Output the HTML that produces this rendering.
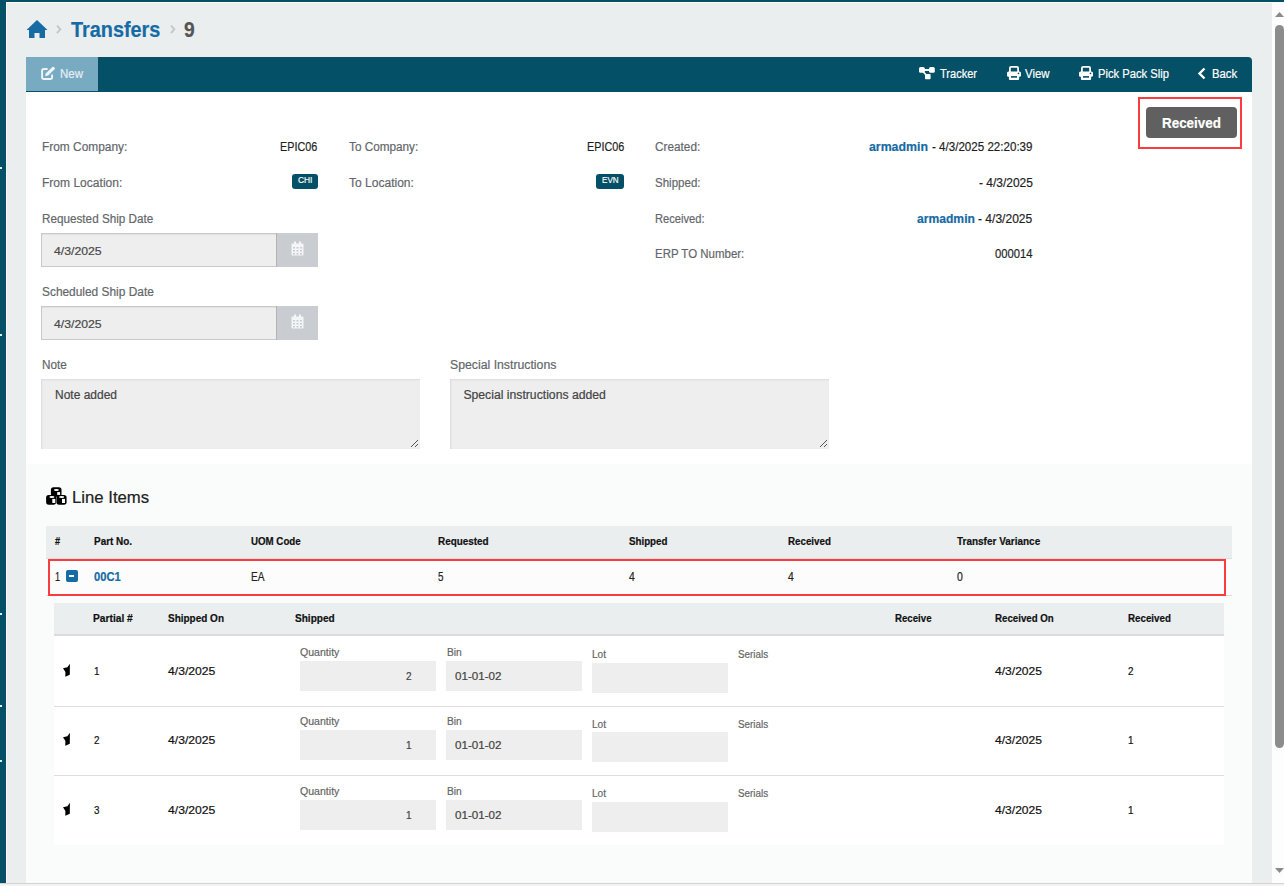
<!DOCTYPE html>
<html><head><meta charset="utf-8"><title>Transfers 9</title>
<style>
html,body{margin:0;padding:0;width:1284px;height:886px;overflow:hidden;background:#eaeeef}
body{position:relative;font-family:"Liberation Sans",sans-serif}
.t{position:absolute;white-space:nowrap;line-height:1;-webkit-text-stroke:0.2px currentColor}
.b{position:absolute;display:block}
</style></head><body>
<div class="b" style="left:0px;top:0px;width:1284px;height:886px;background:#eaeeef"></div>
<div class="b" style="left:0px;top:0px;width:1284px;height:2px;background:#045066"></div>
<div class="b" style="left:0px;top:2px;width:1284px;height:1px;background:#fbfbfb"></div>
<div class="b" style="left:0px;top:0px;width:6px;height:883px;background:#045066"></div>
<div class="b" style="left:6px;top:3px;width:1px;height:880px;background:#fafafa"></div>
<div class="b" style="left:0px;top:167px;width:2px;height:2px;background:#e8eef0"></div>
<div class="b" style="left:0px;top:334px;width:2px;height:2px;background:#e8eef0"></div>
<div class="b" style="left:0px;top:613px;width:2px;height:2px;background:#e8eef0"></div>
<div class="b" style="left:0px;top:705px;width:2px;height:2px;background:#e8eef0"></div>
<div class="b" style="left:0px;top:760px;width:2px;height:2px;background:#e8eef0"></div>
<div class="b" style="left:0px;top:883px;width:1284px;height:1px;background:#d2d2d2"></div>
<div class="b" style="left:0px;top:884px;width:1284px;height:2px;background:#f3f3f3"></div>
<div class="b" style="left:1272px;top:3px;width:12px;height:880px;background:#fdfdfd"></div>
<svg class="b" style="left:1275px;top:11px" width="9" height="7"><polygon points="0,6 4.5,1 9,6" fill="#8a8a8a"/></svg>
<div class="b" style="left:1275px;top:25px;width:9px;height:723px;background:#8c8c8c;border-radius:4.5px"></div>
<svg class="b" style="left:1275px;top:867px" width="9" height="7"><polygon points="0,1 9,1 4.5,6" fill="#8a8a8a"/></svg>
<svg class="b" style="left:26px;top:19px" width="22" height="20" viewBox="0 0 22 20"><path d="M11 1 L21.5 11 L19 11 L19 19 L13.5 19 L13.5 14 L8.5 14 L8.5 19 L3 19 L3 11 L0.5 11 Z" fill="#166ba5"/></svg>
<svg class="b" style="left:55px;top:24px" width="8" height="11"><polyline points="2,1.5 5.3,5.3 2,9.2" fill="none" stroke="#c4c7ca" stroke-width="1.9"/></svg>
<svg class="b" style="left:169px;top:24px" width="8" height="11"><polyline points="2,1.5 5.3,5.3 2,9.2" fill="none" stroke="#c4c7ca" stroke-width="1.9"/></svg>
<div class="t" style="left:71.0px;top:19.15px;font-size:21.8px;color:#166ba5;font-weight:bold;transform:scaleX(0.910);transform-origin:0 0;">Transfers</div>
<div class="t" style="left:184.3px;top:19.15px;font-size:21.8px;color:#555;font-weight:bold;transform:scaleX(0.883);transform-origin:0 0;">9</div>
<div class="b" style="left:26px;top:57px;width:1226px;height:35px;background:#045066;border-radius:0 4px 0 0"></div>
<div class="b" style="left:26px;top:57px;width:72px;height:34px;background:#78aac2"></div>
<svg class="b" style="left:40px;top:66px" width="16" height="15" viewBox="0 0 16 15"><path d="M7.6 3 H3.9 Q2.1 3 2.1 4.8 V11.2 Q2.1 13 3.9 13 H10.3 Q12.1 13 12.1 11.2 V8.6" fill="none" stroke="#eef4f7" stroke-width="1.9"/><path d="M5.1 10.2 L5.7 7.4 L12.4 1.1 Q13.2 0.4 14 1.1 L14.6 1.7 Q15.3 2.5 14.6 3.3 L8.1 9.6 Z" fill="#eef4f7"/></svg>
<div class="t" style="left:59.8px;top:67.67px;font-size:12.79px;color:#e6eff3;transform:scaleX(0.899);transform-origin:0 0;">New</div>
<svg class="b" style="left:918px;top:66px" width="18" height="14" viewBox="0 0 18 14"><path d="M4 4 H14 M4.5 5 L9.5 10.5" stroke="#fff" stroke-width="1.8" fill="none"/><rect x="1" y="1" width="5.8" height="5.8" rx="1.6" fill="#fff"/><rect x="11" y="1" width="5.8" height="5.8" rx="1.6" fill="#fff"/><rect x="7" y="8" width="5.6" height="5.2" rx="0.8" fill="#fff"/></svg>
<div class="t" style="left:939.8px;top:66.63px;font-size:13.08px;color:#ffffff;transform:scaleX(0.844);transform-origin:0 0;">Tracker</div>
<svg class="b" style="left:1007px;top:66px" width="15" height="15" viewBox="0 0 15 15"><rect x="2.9" y="0.9" width="8.2" height="6" rx="1.2" fill="none" stroke="#fff" stroke-width="1.8"/><rect x="0" y="5.4" width="14" height="5.4" rx="1.6" fill="#fff"/><rect x="1.9" y="9" width="10.2" height="5" rx="1" fill="#fff"/><rect x="4" y="10.1" width="6" height="1.6" fill="#045066"/><circle cx="11.5" cy="7.4" r="0.8" fill="#045066"/></svg>
<div class="t" style="left:1025.0px;top:66.63px;font-size:13.08px;color:#ffffff;transform:scaleX(0.875);transform-origin:0 0;">View</div>
<svg class="b" style="left:1079px;top:66px" width="15" height="15" viewBox="0 0 15 15"><rect x="2.9" y="0.9" width="8.2" height="6" rx="1.2" fill="none" stroke="#fff" stroke-width="1.8"/><rect x="0" y="5.4" width="14" height="5.4" rx="1.6" fill="#fff"/><rect x="1.9" y="9" width="10.2" height="5" rx="1" fill="#fff"/><rect x="4" y="10.1" width="6" height="1.6" fill="#045066"/><circle cx="11.5" cy="7.4" r="0.8" fill="#045066"/></svg>
<div class="t" style="left:1097.8px;top:66.63px;font-size:13.08px;color:#ffffff;transform:scaleX(0.857);transform-origin:0 0;">Pick Pack Slip</div>
<svg class="b" style="left:1197px;top:67px" width="10" height="13"><polyline points="7.5,1.5 2.5,6.5 7.5,11.5" fill="none" stroke="#fff" stroke-width="2.4"/></svg>
<div class="t" style="left:1212.3px;top:66.63px;font-size:13.08px;color:#ffffff;transform:scaleX(0.867);transform-origin:0 0;">Back</div>
<div class="b" style="left:26px;top:92px;width:1226px;height:372px;background:#ffffff"></div>
<div class="b" style="left:26px;top:464px;width:1226px;height:419px;background:#fafbfb"></div>
<div class="b" style="left:1138px;top:97px;width:104px;height:52px;border:2px solid #fb3c3f;box-sizing:border-box"></div>
<div class="b" style="left:1146px;top:107px;width:91px;height:31px;background:#606060;border-radius:4px"></div>
<div class="t" style="left:1162.2px;top:115.46px;font-size:15.41px;color:#ffffff;font-weight:bold;transform:scaleX(0.870);transform-origin:0 0;">Received</div>
<div class="t" style="left:41.8px;top:140.82px;font-size:12.5px;color:#63676b;transform:scaleX(0.952);transform-origin:0 0;">From Company:</div>
<div class="t" style="left:280.3px;top:140.82px;font-size:12.5px;color:#1f1f1f;transform:scaleX(0.864);transform-origin:0 0;">EPIC06</div>
<div class="t" style="left:348.7px;top:140.82px;font-size:12.5px;color:#63676b;transform:scaleX(0.940);transform-origin:0 0;">To Company:</div>
<div class="t" style="left:586.8px;top:140.82px;font-size:12.5px;color:#1f1f1f;transform:scaleX(0.864);transform-origin:0 0;">EPIC06</div>
<div class="t" style="left:654.7px;top:140.82px;font-size:12.5px;color:#63676b;transform:scaleX(0.943);transform-origin:0 0;">Created:</div>
<div class="t" style="left:869.0px;top:140.82px;font-size:12.5px;color:#166ba5;font-weight:bold;transform:scaleX(0.986);transform-origin:0 0;">armadmin</div>
<div class="t" style="left:932.0px;top:140.82px;font-size:12.5px;color:#1f1f1f;transform:scaleX(0.927);transform-origin:0 0;">- 4/3/2025 22:20:39</div>
<div class="t" style="left:41.8px;top:176.92px;font-size:12.5px;color:#63676b;transform:scaleX(0.963);transform-origin:0 0;">From Location:</div>
<div class="b" style="left:292px;top:174px;width:26px;height:15px;background:#045066;border-radius:3px"></div>
<div class="t" style="left:297.8px;top:175.16px;font-size:9.74px;color:#fff;transform:scaleX(0.858);transform-origin:0 0;">CHI</div>
<div class="t" style="left:348.7px;top:176.92px;font-size:12.5px;color:#63676b;transform:scaleX(0.963);transform-origin:0 0;">To Location:</div>
<div class="b" style="left:596px;top:174px;width:28px;height:15px;background:#045066;border-radius:3px"></div>
<div class="t" style="left:602.1px;top:175.16px;font-size:9.74px;color:#fff;transform:scaleX(0.829);transform-origin:0 0;">EVN</div>
<div class="t" style="left:654.7px;top:176.92px;font-size:12.5px;color:#63676b;transform:scaleX(0.922);transform-origin:0 0;">Shipped:</div>
<div class="t" style="left:978.6px;top:176.92px;font-size:12.5px;color:#1f1f1f;transform:scaleX(0.957);transform-origin:0 0;">- 4/3/2025</div>
<div class="t" style="left:41.8px;top:212.92px;font-size:12.5px;color:#63676b;transform:scaleX(0.937);transform-origin:0 0;">Requested Ship Date</div>
<div class="t" style="left:654.7px;top:212.92px;font-size:12.5px;color:#63676b;transform:scaleX(0.892);transform-origin:0 0;">Received:</div>
<div class="t" style="left:917.4px;top:212.92px;font-size:12.5px;color:#166ba5;font-weight:bold;transform:scaleX(0.969);transform-origin:0 0;">armadmin</div>
<div class="t" style="left:978.3px;top:212.92px;font-size:12.5px;color:#1f1f1f;transform:scaleX(0.963);transform-origin:0 0;">- 4/3/2025</div>
<div class="t" style="left:654.7px;top:247.92px;font-size:12.5px;color:#63676b;transform:scaleX(0.918);transform-origin:0 0;">ERP TO Number:</div>
<div class="t" style="left:995.0px;top:247.92px;font-size:12.5px;color:#1f1f1f;transform:scaleX(0.899);transform-origin:0 0;">000014</div>
<div class="b" style="left:41px;top:233px;width:236px;height:34px;background:#eeeeee;border:1px solid #c9c9c9;border-right:none;box-sizing:border-box;box-shadow:inset 0 1px 1px rgba(0,0,0,.06)"></div>
<div class="b" style="left:276px;top:233px;width:42px;height:34px;background:#c9ccd1;border-left:1px solid #b3b3b3;box-sizing:border-box"></div>
<svg class="b" style="left:291px;top:241px" width="13" height="15" viewBox="0 0 13 15"><rect x="0.5" y="2.5" width="12" height="12" rx="1" fill="#f4f5f7"/><rect x="3" y="0.5" width="2" height="4" fill="#f4f5f7"/><rect x="8" y="0.5" width="2" height="4" fill="#f4f5f7"/><g fill="#c9ccd1"><rect x="2" y="6" width="2" height="1.5"/><rect x="5.5" y="6" width="2" height="1.5"/><rect x="9" y="6" width="2" height="1.5"/><rect x="2" y="9" width="2" height="1.5"/><rect x="5.5" y="9" width="2" height="1.5"/><rect x="9" y="9" width="2" height="1.5"/><rect x="2" y="12" width="2" height="1.5"/><rect x="5.5" y="12" width="2" height="1.5"/><rect x="9" y="12" width="2" height="1.5"/></g></svg>
<div class="t" style="left:54.4px;top:246.23px;font-size:11.19px;color:#4a4a4a;transform:scaleX(1.095);transform-origin:0 0;">4/3/2025</div>
<div class="t" style="left:41.8px;top:285.92px;font-size:12.5px;color:#63676b;transform:scaleX(0.952);transform-origin:0 0;">Scheduled Ship Date</div>
<div class="b" style="left:41px;top:306px;width:236px;height:34px;background:#eeeeee;border:1px solid #c9c9c9;border-right:none;box-sizing:border-box;box-shadow:inset 0 1px 1px rgba(0,0,0,.06)"></div>
<div class="b" style="left:276px;top:306px;width:42px;height:34px;background:#c9ccd1;border-left:1px solid #b3b3b3;box-sizing:border-box"></div>
<svg class="b" style="left:291px;top:314px" width="13" height="15" viewBox="0 0 13 15"><rect x="0.5" y="2.5" width="12" height="12" rx="1" fill="#f4f5f7"/><rect x="3" y="0.5" width="2" height="4" fill="#f4f5f7"/><rect x="8" y="0.5" width="2" height="4" fill="#f4f5f7"/><g fill="#c9ccd1"><rect x="2" y="6" width="2" height="1.5"/><rect x="5.5" y="6" width="2" height="1.5"/><rect x="9" y="6" width="2" height="1.5"/><rect x="2" y="9" width="2" height="1.5"/><rect x="5.5" y="9" width="2" height="1.5"/><rect x="9" y="9" width="2" height="1.5"/><rect x="2" y="12" width="2" height="1.5"/><rect x="5.5" y="12" width="2" height="1.5"/><rect x="9" y="12" width="2" height="1.5"/></g></svg>
<div class="t" style="left:54.4px;top:319.23px;font-size:11.19px;color:#4a4a4a;transform:scaleX(1.095);transform-origin:0 0;">4/3/2025</div>
<div class="t" style="left:42.0px;top:358.82px;font-size:12.5px;color:#63676b;transform:scaleX(0.939);transform-origin:0 0;">Note</div>
<div class="t" style="left:450.3px;top:358.82px;font-size:12.5px;color:#63676b;transform:scaleX(0.981);transform-origin:0 0;">Special Instructions</div>
<div class="b" style="left:41px;top:379px;width:379px;height:70px;background:#eeeeee;box-shadow:inset 1px 1px 2px rgba(0,0,0,.08)"></div>
<svg class="b" style="left:410px;top:439px" width="9" height="9"><path d="M1 8 L8 1 M5 8 L8 5" stroke="#555" stroke-width="1"/></svg>
<div class="b" style="left:450px;top:379px;width:379px;height:70px;background:#eeeeee;box-shadow:inset 1px 1px 2px rgba(0,0,0,.08)"></div>
<svg class="b" style="left:819px;top:439px" width="9" height="9"><path d="M1 8 L8 1 M5 8 L8 5" stroke="#555" stroke-width="1"/></svg>
<div class="t" style="left:54.9px;top:388.86px;font-size:12.21px;color:#444;transform:scaleX(0.982);transform-origin:0 0;">Note added</div>
<div class="t" style="left:463.4px;top:388.86px;font-size:12.21px;color:#444;">Special instructions added</div>
<svg class="b" style="left:45px;top:486px" width="23" height="20" viewBox="0 0 23 20"><g fill="#000"><rect x="5.9" y="1.2" width="10.6" height="9.5" rx="2.6"/><rect x="1.1" y="9.1" width="10" height="9.6" rx="2.6"/><rect x="11.4" y="9.1" width="10.2" height="9.6" rx="2.6"/></g><g fill="#fff"><ellipse cx="11.4" cy="3.9" rx="2.5" ry="1"/><rect x="12.2" y="6.1" width="2.9" height="2.8"/><ellipse cx="6.9" cy="11.1" rx="2.6" ry="1"/><rect x="7.3" y="12.9" width="3" height="4.1"/><ellipse cx="16.65" cy="11.1" rx="2.6" ry="1"/><rect x="17" y="12.9" width="3" height="4.1"/></g></svg>
<div class="t" style="left:71.5px;top:488.80px;font-size:17.01px;color:#222;transform:scaleX(0.983);transform-origin:0 0;">Line Items</div>
<div class="b" style="left:46px;top:526px;width:1186px;height:33px;background:#eaeeef"></div>
<div class="t" style="left:54.7px;top:536.19px;font-size:10.76px;color:#111;font-weight:bold;transform:scaleX(0.852);transform-origin:0 0;">#</div>
<div class="t" style="left:94.0px;top:536.19px;font-size:10.76px;color:#111;font-weight:bold;transform:scaleX(0.924);transform-origin:0 0;">Part No.</div>
<div class="t" style="left:250.8px;top:536.19px;font-size:10.76px;color:#111;font-weight:bold;transform:scaleX(0.904);transform-origin:0 0;">UOM Code</div>
<div class="t" style="left:437.9px;top:536.19px;font-size:10.76px;color:#111;font-weight:bold;transform:scaleX(0.922);transform-origin:0 0;">Requested</div>
<div class="t" style="left:629.0px;top:536.19px;font-size:10.76px;color:#111;font-weight:bold;transform:scaleX(0.905);transform-origin:0 0;">Shipped</div>
<div class="t" style="left:787.6px;top:536.19px;font-size:10.76px;color:#111;font-weight:bold;transform:scaleX(0.908);transform-origin:0 0;">Received</div>
<div class="t" style="left:957.0px;top:536.19px;font-size:10.76px;color:#111;font-weight:bold;transform:scaleX(0.928);transform-origin:0 0;">Transfer Variance</div>
<div class="b" style="left:46px;top:559px;width:1186px;height:37px;background:#fcfcfd;border-bottom:1px solid #dcdcdc;box-sizing:border-box"></div>
<div class="b" style="left:46px;top:558px;width:1186px;height:1px;background:#dcdfe1"></div>
<div class="b" style="left:48px;top:559px;width:1178px;height:37px;border:2px solid #fb3c3f;box-sizing:border-box"></div>
<div class="t" style="left:54.7px;top:570.69px;font-size:12.06px;color:#222;transform:scaleX(0.760);transform-origin:0 0;">1</div>
<div class="b" style="left:66px;top:570px;width:11.5px;height:11.5px;background:#166ba5;border-radius:2px"></div>
<div class="b" style="left:69.3px;top:575.4px;width:5.0px;height:2.0px;background:#f4f8fb"></div>
<div class="t" style="left:94.3px;top:570.69px;font-size:12.06px;color:#166ba5;font-weight:bold;transform:scaleX(0.926);transform-origin:0 0;">00C1</div>
<div class="t" style="left:250.8px;top:570.69px;font-size:12.06px;color:#222;transform:scaleX(0.839);transform-origin:0 0;">EA</div>
<div class="t" style="left:437.9px;top:570.69px;font-size:12.06px;color:#222;transform:scaleX(0.820);transform-origin:0 0;">5</div>
<div class="t" style="left:628.6px;top:570.69px;font-size:12.06px;color:#222;transform:scaleX(0.865);transform-origin:0 0;">4</div>
<div class="t" style="left:787.6px;top:570.69px;font-size:12.06px;color:#222;transform:scaleX(0.865);transform-origin:0 0;">4</div>
<div class="t" style="left:957.0px;top:570.69px;font-size:12.06px;color:#222;transform:scaleX(0.865);transform-origin:0 0;">0</div>
<div class="b" style="left:54px;top:603px;width:1170px;height:242px;background:#ffffff"></div>
<div class="b" style="left:54px;top:603px;width:1170px;height:33px;background:#eaeeef;border-bottom:2px solid #dadcde;box-sizing:border-box"></div>
<div class="t" style="left:93.2px;top:613.45px;font-size:11.05px;color:#111;font-weight:bold;transform:scaleX(0.926);transform-origin:0 0;">Partial #</div>
<div class="t" style="left:168.0px;top:613.45px;font-size:11.05px;color:#111;font-weight:bold;transform:scaleX(0.903);transform-origin:0 0;">Shipped On</div>
<div class="t" style="left:294.9px;top:613.45px;font-size:11.05px;color:#111;font-weight:bold;transform:scaleX(0.911);transform-origin:0 0;">Shipped</div>
<div class="t" style="left:895.4px;top:613.45px;font-size:11.05px;color:#111;font-weight:bold;transform:scaleX(0.874);transform-origin:0 0;">Receive</div>
<div class="t" style="left:995.0px;top:613.45px;font-size:11.05px;color:#111;font-weight:bold;transform:scaleX(0.878);transform-origin:0 0;">Received On</div>
<div class="t" style="left:1128.1px;top:613.45px;font-size:11.05px;color:#111;font-weight:bold;transform:scaleX(0.884);transform-origin:0 0;">Received</div>
<div class="b" style="left:54px;top:706px;width:1170px;height:1px;background:#dedede"></div>
<svg class="b" style="left:62px;top:663px" width="9" height="15" viewBox="0 0 9 15"><polygon points="7.9,0.8 7.8,11.8 3.3,13.7 3.4,9.1 1,5.3 5.4,4.3" fill="#000"/></svg>
<div class="t" style="left:93.9px;top:664.66px;font-size:11.63px;color:#111;transform:scaleX(0.850);transform-origin:0 0;">1</div>
<div class="t" style="left:168.0px;top:664.66px;font-size:11.63px;color:#111;transform:scaleX(1.047);transform-origin:0 0;">4/3/2025</div>
<div class="t" style="left:300.1px;top:646.85px;font-size:11.05px;color:#666;transform:scaleX(0.957);transform-origin:0 0;">Quantity</div>
<div class="b" style="left:300px;top:661px;width:136px;height:30px;background:#eeeeee"></div>
<div class="t" style="left:405.6px;top:670.60px;font-size:11.34px;color:#444;transform:scaleX(0.888);transform-origin:0 0;">2</div>
<div class="t" style="left:446.5px;top:646.85px;font-size:11.05px;color:#666;transform:scaleX(0.927);transform-origin:0 0;">Bin</div>
<div class="b" style="left:446px;top:661px;width:136px;height:30px;background:#eeeeee"></div>
<div class="t" style="left:455.1px;top:670.60px;font-size:11.34px;color:#444;transform:scaleX(1.024);transform-origin:0 0;">01-01-02</div>
<div class="t" style="left:592.3px;top:649.35px;font-size:11.05px;color:#666;transform:scaleX(0.911);transform-origin:0 0;">Lot</div>
<div class="b" style="left:592px;top:663px;width:136px;height:30px;background:#eeeeee"></div>
<div class="t" style="left:738.3px;top:649.35px;font-size:11.05px;color:#666;transform:scaleX(0.891);transform-origin:0 0;">Serials</div>
<div class="t" style="left:995.0px;top:664.66px;font-size:11.63px;color:#111;transform:scaleX(1.038);transform-origin:0 0;">4/3/2025</div>
<div class="t" style="left:1128.1px;top:664.66px;font-size:11.63px;color:#111;transform:scaleX(0.850);transform-origin:0 0;">2</div>
<div class="b" style="left:54px;top:775px;width:1170px;height:1px;background:#dedede"></div>
<svg class="b" style="left:62px;top:732.3px" width="9" height="15" viewBox="0 0 9 15"><polygon points="7.9,0.8 7.8,11.8 3.3,13.7 3.4,9.1 1,5.3 5.4,4.3" fill="#000"/></svg>
<div class="t" style="left:93.9px;top:733.96px;font-size:11.63px;color:#111;transform:scaleX(0.850);transform-origin:0 0;">2</div>
<div class="t" style="left:168.0px;top:733.96px;font-size:11.63px;color:#111;transform:scaleX(1.047);transform-origin:0 0;">4/3/2025</div>
<div class="t" style="left:300.1px;top:716.15px;font-size:11.05px;color:#666;transform:scaleX(0.957);transform-origin:0 0;">Quantity</div>
<div class="b" style="left:300px;top:730.3px;width:136px;height:30.0px;background:#eeeeee"></div>
<div class="t" style="left:405.6px;top:739.90px;font-size:11.34px;color:#444;transform:scaleX(0.888);transform-origin:0 0;">1</div>
<div class="t" style="left:446.5px;top:716.15px;font-size:11.05px;color:#666;transform:scaleX(0.927);transform-origin:0 0;">Bin</div>
<div class="b" style="left:446px;top:730.3px;width:136px;height:30.0px;background:#eeeeee"></div>
<div class="t" style="left:455.1px;top:739.90px;font-size:11.34px;color:#444;transform:scaleX(1.024);transform-origin:0 0;">01-01-02</div>
<div class="t" style="left:592.3px;top:718.65px;font-size:11.05px;color:#666;transform:scaleX(0.911);transform-origin:0 0;">Lot</div>
<div class="b" style="left:592px;top:732.3px;width:136px;height:30.0px;background:#eeeeee"></div>
<div class="t" style="left:738.3px;top:718.65px;font-size:11.05px;color:#666;transform:scaleX(0.891);transform-origin:0 0;">Serials</div>
<div class="t" style="left:995.0px;top:733.96px;font-size:11.63px;color:#111;transform:scaleX(1.038);transform-origin:0 0;">4/3/2025</div>
<div class="t" style="left:1128.1px;top:733.96px;font-size:11.63px;color:#111;transform:scaleX(0.850);transform-origin:0 0;">1</div>
<svg class="b" style="left:62px;top:802px" width="9" height="15" viewBox="0 0 9 15"><polygon points="7.9,0.8 7.8,11.8 3.3,13.7 3.4,9.1 1,5.3 5.4,4.3" fill="#000"/></svg>
<div class="t" style="left:93.9px;top:803.66px;font-size:11.63px;color:#111;transform:scaleX(0.850);transform-origin:0 0;">3</div>
<div class="t" style="left:168.0px;top:803.66px;font-size:11.63px;color:#111;transform:scaleX(1.047);transform-origin:0 0;">4/3/2025</div>
<div class="t" style="left:300.1px;top:785.85px;font-size:11.05px;color:#666;transform:scaleX(0.957);transform-origin:0 0;">Quantity</div>
<div class="b" style="left:300px;top:800px;width:136px;height:30px;background:#eeeeee"></div>
<div class="t" style="left:405.6px;top:809.60px;font-size:11.34px;color:#444;transform:scaleX(0.888);transform-origin:0 0;">1</div>
<div class="t" style="left:446.5px;top:785.85px;font-size:11.05px;color:#666;transform:scaleX(0.927);transform-origin:0 0;">Bin</div>
<div class="b" style="left:446px;top:800px;width:136px;height:30px;background:#eeeeee"></div>
<div class="t" style="left:455.1px;top:809.60px;font-size:11.34px;color:#444;transform:scaleX(1.024);transform-origin:0 0;">01-01-02</div>
<div class="t" style="left:592.3px;top:788.35px;font-size:11.05px;color:#666;transform:scaleX(0.911);transform-origin:0 0;">Lot</div>
<div class="b" style="left:592px;top:802px;width:136px;height:30px;background:#eeeeee"></div>
<div class="t" style="left:738.3px;top:788.35px;font-size:11.05px;color:#666;transform:scaleX(0.891);transform-origin:0 0;">Serials</div>
<div class="t" style="left:995.0px;top:803.66px;font-size:11.63px;color:#111;transform:scaleX(1.038);transform-origin:0 0;">4/3/2025</div>
<div class="t" style="left:1128.1px;top:803.66px;font-size:11.63px;color:#111;transform:scaleX(0.850);transform-origin:0 0;">1</div>
</body></html>
